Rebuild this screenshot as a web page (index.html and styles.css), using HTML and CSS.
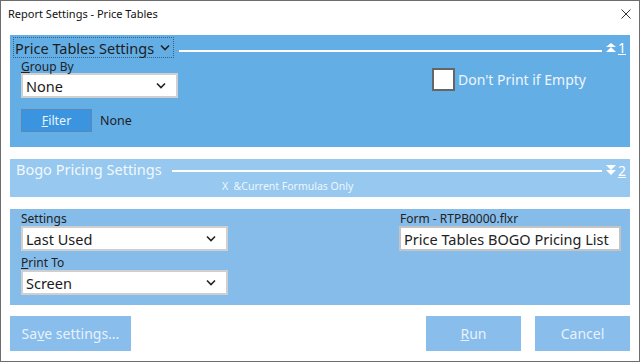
FILE: index.html
```html
<!DOCTYPE html>
<html lang="en">
<head>
    <meta charset="UTF-8">
    <title>Report Settings - Price Tables</title>
    <link rel="stylesheet" href="styles.css">
</head>
<body>
    <div class="window">
        <div class="titlebar">
            <span class="title">Report Settings - Price Tables</span>
            <svg class="close" width="10" height="10" viewBox="0 0 10 10"><path d="M0.5 0.5 L9.5 9.5 M9.5 0.5 L0.5 9.5" stroke="#333" stroke-width="1"/></svg>
        </div>

        <div class="content">
            <!-- section 1 -->
            <div class="panel panel-main">
                <div class="panel-head">
                    <span class="head-focus">Price Tables Settings
                        <svg class="chev" width="10" height="7" viewBox="0 0 10 7"><path d="M1 1.5 L5 5.5 L9 1.5" fill="none" stroke="#222" stroke-width="1.6"/></svg>
                    </span>
                    <span class="head-line"></span>
                    <span class="head-num">
                        <svg width="12" height="10" viewBox="0 0 12 10"><path d="M6 0 L11 4 L1 4 Z M6 4 L11 9 L1 9 Z" fill="#fff"/></svg>
                        <u>1</u>
                    </span>
                </div>
                <div class="panel-body">
                    <div class="col-left">
                        <label class="lbl"><u>G</u>roup By</label>
                        <div class="select sel-group">None
                            <svg width="10" height="7" viewBox="0 0 10 7"><path d="M1 1.5 L5 5.5 L9 1.5" fill="none" stroke="#222" stroke-width="1.6"/></svg>
                        </div>
                        <div class="filter-row">
                            <button class="btn-filter"><u>F</u>ilter</button>
                            <span class="filter-val">None</span>
                        </div>
                    </div>
                    <div class="col-right">
                        <span class="checkbox"></span>
                        <span class="check-label">Don't Print if Empty</span>
                    </div>
                </div>
            </div>

            <!-- section 2 -->
            <div class="panel panel-bogo">
                <div class="panel-head">
                    <span class="bogo-title">Bogo Pricing Settings</span>
                    <span class="head-line"></span>
                    <span class="head-num">
                        <svg width="12" height="10" viewBox="0 0 12 10"><path d="M1 0 L11 0 L6 5 Z M1 5 L11 5 L6 10 Z" fill="#fff"/></svg>
                        <u>2</u>
                    </span>
                </div>
                <div class="bogo-sub">X &nbsp;&amp;Current Formulas Only</div>
            </div>

            <!-- section 3 -->
            <div class="panel panel-output">
                <div class="col-left">
                    <label class="lbl">Settings</label>
                    <div class="select sel-wide">Last Used
                        <svg width="10" height="7" viewBox="0 0 10 7"><path d="M1 1.5 L5 5.5 L9 1.5" fill="none" stroke="#222" stroke-width="1.6"/></svg>
                    </div>
                    <label class="lbl lbl-print"><u>P</u>rint To</label>
                    <div class="select sel-wide">Screen
                        <svg width="10" height="7" viewBox="0 0 10 7"><path d="M1 1.5 L5 5.5 L9 1.5" fill="none" stroke="#222" stroke-width="1.6"/></svg>
                    </div>
                </div>
                <div class="col-form">
                    <label class="lbl">Form - RTPB0000.flxr</label>
                    <div class="textbox">Price Tables BOGO Pricing List</div>
                </div>
            </div>

            <div class="actions">
                <button class="btn btn-save">Sa<u>v</u>e settings...</button>
                <span class="spacer"></span>
                <button class="btn"><u>R</u>un</button>
                <button class="btn">Cancel</button>
            </div>
        </div>
    </div>
</body>
</html>
```

FILE: styles.css
```css
/* General styles */
body {
    margin: 0;
    background: #fff;
    font-family: "Noto Sans", "Open Sans", sans-serif;
    color: #222;
}

.window {
    width: 638px;
    height: 360px;
    border: 1px solid #6d6d6d;
    background: #fff;
}

.titlebar {
    height: 34px;
    display: flex;
    justify-content: space-between;
    padding: 0 8px 0 7px;
}

.title {
    font-size: 11px;
    margin-top: 5px;
    color: #111;
}

.close {
    margin-top: 8px;
}

.content {
    padding: 0 9px;
}

.panel {
    margin-bottom: 12px;
}

.panel-main {
    background: #64aee6;
    height: 112px;
    padding: 2px 3px 0 3px;
    box-sizing: border-box;
}

.panel-head {
    display: flex;
    align-items: center;
    height: 21px;
}

.head-focus {
    font-size: 14.5px;
    color: #1d1d1d;
    border: 1px dotted #3a5f86;
    padding: 0 3px 0 1px;
    height: 19px;
    line-height: 18px;
    display: flex;
    align-items: center;
    gap: 6px;
}

.head-line {
    flex: 1;
    height: 2px;
    background: #fff;
    margin: 6px 3px 0 5px;
}

.head-num {
    display: flex;
    align-items: center;
    gap: 1px;
    color: #fff;
    font-size: 14px;
    margin-right: 1px;
}

.panel-body {
    display: flex;
    justify-content: space-between;
    padding-left: 8px;
}

.lbl {
    display: block;
    font-size: 12px;
    line-height: 13px;
    color: #222;
}

.col-left .lbl {
    margin-top: 2px;
}

.select {
    background: #fff;
    border: 2px solid #cfcfcf;
    box-sizing: border-box;
    height: 25px;
    font-size: 14.5px;
    padding: 0 10px 0 3px;
    display: flex;
    align-items: center;
    justify-content: space-between;
    color: #1a1a1a;
}

.sel-group {
    width: 157px;
}

.filter-row {
    display: flex;
    align-items: center;
    margin-top: 11px;
}

.btn-filter {
    width: 71px;
    height: 23px;
    background: #3a94df;
    border: 1px solid #5b87b4;
    color: #e9f3fc;
    font-family: inherit;
    font-size: 12.5px;
    padding: 0;
}

.filter-val {
    font-size: 12.5px;
    margin-left: 8px;
    color: #1d1d1d;
}

.col-right {
    display: flex;
    align-items: center;
    margin: 10px 41px 0 0;
    align-self: flex-start;
}

.checkbox {
    width: 19px;
    height: 19px;
    background: #fff;
    border: 2px solid #666;
}

.check-label {
    font-size: 14px;
    color: #eef5fc;
    margin-left: 3px;
}

.panel-bogo {
    background: #97c8ef;
    height: 38px;
    padding: 0 3px 0 6px;
    box-sizing: border-box;
}

.bogo-title {
    font-size: 14.5px;
    color: #f2f8fd;
    margin-top: -2px;
}

.panel-bogo .panel-head {
    height: 22px;
}

.panel-bogo .head-line {
    margin: 1px 3px 0 10px;
}

.bogo-sub {
    font-size: 10.5px;
    color: #eef6fd;
    margin: -2px 0 0 206px;
}

.panel-output {
    background: #86bcea;
    height: 96px;
    box-sizing: border-box;
    padding: 3px 9px 0 11px;
    display: flex;
    justify-content: space-between;
    margin-bottom: 11px;
}

.panel-output .col-left .lbl {
    margin-top: 0;
    margin-bottom: 1px;
}

.panel-output .lbl-print {
    margin-top: 5px !important;
}

.sel-wide {
    width: 207px;
    height: 25px;
}

.col-form .lbl {
    margin: 0 0 1px 1px;
}

.textbox {
    width: 222px;
    height: 25px;
    box-sizing: border-box;
    background: #fff;
    border: 2px solid #c4c4c4;
    font-size: 14.5px;
    padding-left: 3px;
    display: flex;
    align-items: center;
}

.actions {
    display: flex;
    gap: 14px;
}

.spacer {
    flex: 1;
}

.btn {
    width: 95px;
    height: 35px;
    background: #88bdec;
    border: none;
    color: #e8f2fb;
    font-family: inherit;
    font-size: 14px;
    padding: 0;
}

.btn-save {
    width: 121px;
}
```
